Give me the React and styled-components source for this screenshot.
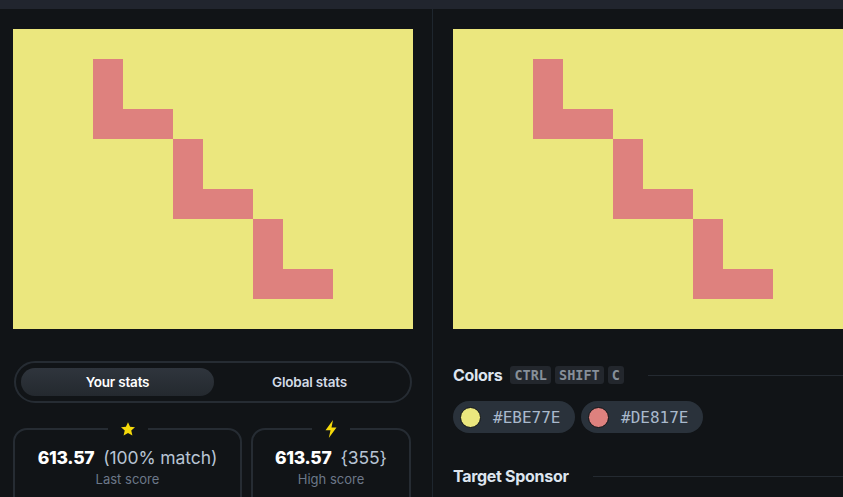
import React from 'react';
import styled, { createGlobalStyle } from 'styled-components';

const GlobalStyle = createGlobalStyle`
  html, body {
    margin: 0;
    background: #111417;
    overflow: hidden;
    font-family: Inter, "Noto Sans", sans-serif;
  }
`;

const TopBar = styled.div`
  height: 9px;
  background: #21252e;
`;

const Main = styled.div`
  display: grid;
  grid-template-columns: 432px 1px 1fr;
  height: 488px;
`;

const Divider = styled.div`
  background: #1e262e;
`;

const Column = styled.div`
  display: flex;
  flex-direction: column;
  padding: ${(p) => p.$pad};
  overflow: hidden;
  min-width: 0;
  & > * { flex-shrink: 0; }
`;

const Tabs = styled.div`
  margin-top: 32px;
  margin-left: 1px;
  width: 398px;
  height: 42px;
  box-sizing: border-box;
  border: 2px solid #262c33;
  border-radius: 21px;
  display: grid;
  grid-template-columns: 193px 1fr;
  padding: 5px 5px;
`;

const Tab = styled.div`
  display: flex;
  align-items: center;
  justify-content: center;
  border-radius: 15px;
  font-size: 13.5px;
  font-weight: 600;
  letter-spacing: -0.2px;
  color: ${(p) => (p.$active ? '#ffffff' : '#d3dbe6')};
  background: ${(p) => (p.$active ? 'linear-gradient(180deg, #2f353d, #24292f)' : 'transparent')};
`;

const Cards = styled.div`
  display: grid;
  grid-template-columns: 229px 160px;
  gap: 9px;
  margin-top: 25px;
`;

const Card = styled.div`
  position: relative;
  height: 90px;
  border: 2px solid #262c33;
  border-radius: 14px;
  display: flex;
  flex-direction: column;
  align-items: center;
  padding-top: 17px;
  box-sizing: border-box;
`;

const CardIcon = styled.div`
  position: absolute;
  top: -12px;
  left: 50%;
  transform: translateX(-50%);
  background: #111417;
  padding: 0 12px;
  display: flex;
  height: 22px;
  align-items: center;
`;

const ScoreRow = styled.div`
  display: flex;
  align-items: baseline;
  gap: 9px;
  font-size: 17.5px;
  line-height: 22px;
`;

const ScoreValue = styled.span`
  font-weight: 800;
  color: #ffffff;
  letter-spacing: -0.3px;
`;

const ScoreExtra = styled.span`
  color: #b8c4d4;
  letter-spacing: -0.1px;
`;

const ScoreLabel = styled.div`
  margin-top: 2px;
  font-size: 13px;
  color: #6c7889;
`;

const SectionHead = styled.div`
  display: flex;
  align-items: center;
  gap: 4px;
  margin-top: ${(p) => p.$top};
`;

const SectionTitle = styled.span`
  font-size: 16px;
  font-weight: 700;
  color: #dde5ef;
  letter-spacing: -0.3px;
  margin-right: ${(p) => p.$gap || '0'};
`;

const Kbd = styled.span`
  font-family: "DejaVu Sans Mono", monospace;
  font-size: 13.5px;
  font-weight: 700;
  color: #878f99;
  background: #23272d;
  border-radius: 3px;
  padding: 0 4px;
  line-height: 18px;
`;

const Rule = styled.div`
  flex: 1;
  height: 1px;
  background: #242a31;
  margin-left: ${(p) => p.$gap};
`;

const Chips = styled.div`
  display: flex;
  gap: 6px;
  margin-top: 16px;
`;

const Chip = styled.div`
  display: flex;
  align-items: center;
  gap: 12px;
  width: 122px;
  height: 32px;
  box-sizing: border-box;
  padding-left: 7px;
  border-radius: 16px;
  background: #2a323b;
`;

const Swatch = styled.span`
  width: 19px;
  height: 19px;
  border-radius: 50%;
  background: ${(p) => p.$color};
  border: 1.5px solid #111417;
`;

const ChipText = styled.span`
  font-family: "DejaVu Sans Mono", monospace;
  font-size: 16px;
  color: #a9b9cc;
`;

const Art = () => (
  <svg width="400" height="300" viewBox="0 0 400 300" style={{ flexShrink: 0, display: 'block' }}>
    <rect width="400" height="300" fill="#EBE77E" />
    <g fill="#DE817E">
      <rect x="80" y="30" width="30" height="80" />
      <rect x="80" y="80" width="80" height="30" />
      <rect x="160" y="110" width="30" height="80" />
      <rect x="160" y="160" width="80" height="30" />
      <rect x="240" y="190" width="30" height="80" />
      <rect x="240" y="240" width="80" height="30" />
    </g>
  </svg>
);

const Star = () => (
  <svg width="16" height="16" viewBox="0 0 24 24">
    <path d="M12 1.8l3.1 6.9 7.4.7-5.6 5 1.7 7.4L12 18l-6.6 3.8 1.7-7.4-5.6-5 7.4-.7z" fill="#f5d90a" />
  </svg>
);

const Bolt = () => (
  <svg width="14" height="18" viewBox="0 0 14 18">
    <path d="M9 0L1.5 10.2h5L4.8 18 12.5 7.6h-5L9 0z" fill="#f5d90a" />
  </svg>
);

export default function App() {
  return (
    <>
      <GlobalStyle />
      <TopBar />
      <Main>
        <Column $pad="20px 19px 0 13px">
          <Art />
          <Tabs>
            <Tab $active>Your stats</Tab>
            <Tab>Global stats</Tab>
          </Tabs>
          <Cards>
            <Card>
              <CardIcon><Star /></CardIcon>
              <ScoreRow>
                <ScoreValue>613.57</ScoreValue>
                <ScoreExtra>(100% match)</ScoreExtra>
              </ScoreRow>
              <ScoreLabel>Last score</ScoreLabel>
            </Card>
            <Card>
              <CardIcon><Bolt /></CardIcon>
              <ScoreRow>
                <ScoreValue>613.57</ScoreValue>
                <ScoreExtra>{'{355}'}</ScoreExtra>
              </ScoreRow>
              <ScoreLabel>High score</ScoreLabel>
            </Card>
          </Cards>
        </Column>
        <Divider />
        <Column $pad="20px 0 0 20px">
          <Art />
          <SectionHead $top="36px">
            <SectionTitle $gap="4px">Colors</SectionTitle>
            <Kbd>CTRL</Kbd>
            <Kbd>SHIFT</Kbd>
            <Kbd>C</Kbd>
            <Rule $gap="20px" />
          </SectionHead>
          <Chips>
            <Chip>
              <Swatch $color="#EBE77E" />
              <ChipText>#EBE77E</ChipText>
            </Chip>
            <Chip>
              <Swatch $color="#DE817E" />
              <ChipText>#DE817E</ChipText>
            </Chip>
          </Chips>
          <SectionHead $top="33px">
            <SectionTitle>Target Sponsor</SectionTitle>
            <Rule $gap="20px" />
          </SectionHead>
        </Column>
      </Main>
    </>
  );
}
